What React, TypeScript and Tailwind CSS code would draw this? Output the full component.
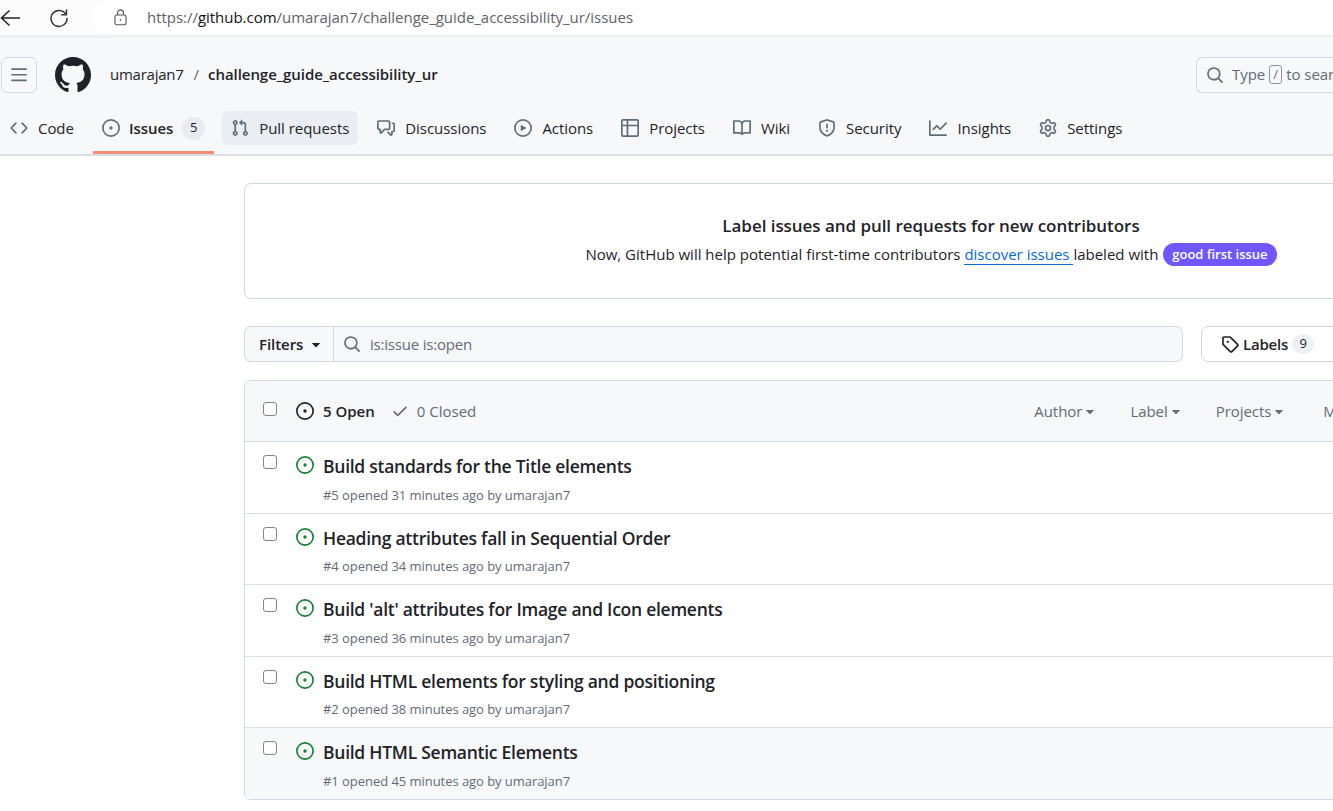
import type { FC } from "react";

// octicons, 16px grid
const icons = {
  code: "m11.28 3.22 4.25 4.25a.75.75 0 0 1 0 1.06l-4.25 4.25a.749.749 0 0 1-1.275-.326.749.749 0 0 1 .215-.734L13.94 8l-3.72-3.72a.749.749 0 0 1 .326-1.275.749.749 0 0 1 .734.215Zm-6.56 0a.751.751 0 0 1 1.042.018.751.751 0 0 1 .018 1.042L2.06 8l3.72 3.72a.749.749 0 0 1-.326 1.275.749.749 0 0 1-.734-.215L.47 8.53a.75.75 0 0 1 0-1.06Z",
  issue: "M8 9.5a1.5 1.5 0 1 0 0-3 1.5 1.5 0 0 0 0 3ZM8 0a8 8 0 1 1 0 16A8 8 0 0 1 8 0ZM1.5 8a6.5 6.5 0 1 0 13 0 6.5 6.5 0 0 0-13 0Z",
  pull: "M1.5 3.25a2.25 2.25 0 1 1 3 2.122v5.256a2.251 2.251 0 1 1-1.5 0V5.372A2.25 2.25 0 0 1 1.5 3.25Zm5.677-.177L9.573.677A.25.25 0 0 1 10 .854V2.5h1A2.5 2.5 0 0 1 13.5 5v5.628a2.251 2.251 0 1 1-1.5 0V5a1 1 0 0 0-1-1h-1v1.646a.25.25 0 0 1-.427.177L7.177 3.427a.25.25 0 0 1 0-.354ZM3.75 2.5a.75.75 0 1 0 0 1.5.75.75 0 0 0 0-1.5Zm0 9.5a.75.75 0 1 0 0 1.5.75.75 0 0 0 0-1.5Zm8.25.75a.75.75 0 1 0 1.5 0 .75.75 0 0 0-1.5 0Z",
  discussion: "M1.75 1h8.5c.966 0 1.75.784 1.75 1.75v5.5A1.75 1.75 0 0 1 10.25 10H7.061l-2.574 2.573A1.458 1.458 0 0 1 2 11.543V10h-.25A1.75 1.75 0 0 1 0 8.25v-5.5C0 1.784.784 1 1.75 1ZM1.5 2.75v5.5c0 .138.112.25.25.25h1a.75.75 0 0 1 .75.75v2.19l2.72-2.72a.749.749 0 0 1 .53-.22h3.5a.25.25 0 0 0 .25-.25v-5.5a.25.25 0 0 0-.25-.25h-8.5a.25.25 0 0 0-.25.25Zm13 2a.25.25 0 0 0-.25-.25h-.5a.75.75 0 0 1 0-1.5h.5c.966 0 1.75.784 1.75 1.75v5.5A1.75 1.75 0 0 1 14.25 12H14v1.543a1.458 1.458 0 0 1-2.487 1.03L9.22 12.28a.749.749 0 0 1 .326-1.275.749.749 0 0 1 .734.215l2.22 2.22v-2.19a.75.75 0 0 1 .75-.75h1a.25.25 0 0 0 .25-.25Z",
  play: "M8 0a8 8 0 1 1 0 16A8 8 0 0 1 8 0ZM1.5 8a6.5 6.5 0 1 0 13 0 6.5 6.5 0 0 0-13 0Zm4.879-2.773 4.264 2.559a.25.25 0 0 1 0 .428l-4.264 2.559A.25.25 0 0 1 6 10.559V5.442a.25.25 0 0 1 .379-.215Z",
  table: "M0 1.75C0 .784.784 0 1.75 0h12.5C15.216 0 16 .784 16 1.75v12.5A1.75 1.75 0 0 1 14.25 16H1.75A1.75 1.75 0 0 1 0 14.25ZM6.5 6.5v8h7.75a.25.25 0 0 0 .25-.25V6.5Zm8-1.5V1.75a.25.25 0 0 0-.25-.25H6.5V5Zm-13 1.5v7.75c0 .138.112.25.25.25H5v-8ZM5 5V1.5H1.75a.25.25 0 0 0-.25.25V5Z",
  book: "M0 1.75A.75.75 0 0 1 .75 1h4.253c1.227 0 2.317.59 3 1.501A3.743 3.743 0 0 1 11.006 1h4.245a.75.75 0 0 1 .75.75v10.5a.75.75 0 0 1-.75.75h-4.507a2.25 2.25 0 0 0-1.591.659l-.622.621a.75.75 0 0 1-1.06 0l-.622-.621A2.25 2.25 0 0 0 5.258 13H.75a.75.75 0 0 1-.75-.75Zm7.251 10.324.004-5.073-.002-2.253A2.25 2.25 0 0 0 5.003 2.5H1.5v9h3.757a3.75 3.75 0 0 1 1.994.574ZM8.755 4.75l-.004 7.322a3.752 3.752 0 0 1 1.992-.572H14.5v-9h-3.495a2.25 2.25 0 0 0-2.25 2.25Z",
  shield: "M7.467.133a1.748 1.748 0 0 1 1.066 0l5.25 1.68A1.75 1.75 0 0 1 15 3.48V7c0 1.566-.32 3.182-1.303 4.682-.983 1.498-2.585 2.813-5.032 3.855a1.697 1.697 0 0 1-1.33 0c-2.447-1.042-4.049-2.357-5.032-3.855C1.32 10.182 1 8.566 1 7V3.48a1.75 1.75 0 0 1 1.217-1.667Zm.61 1.429a.25.25 0 0 0-.153 0l-5.25 1.68a.25.25 0 0 0-.174.238V7c0 1.358.275 2.666 1.057 3.86.784 1.194 2.121 2.34 4.366 3.297a.196.196 0 0 0 .154 0c2.245-.956 3.582-2.104 4.366-3.298C13.225 9.666 13.5 8.36 13.5 7V3.48a.251.251 0 0 0-.174-.237l-5.25-1.68ZM8.75 4.75v3a.75.75 0 0 1-1.5 0v-3a.75.75 0 0 1 1.5 0ZM9 10.5a1 1 0 1 1-2 0 1 1 0 0 1 2 0Z",
  graph: "M1.5 1.75V13.5h13.75a.75.75 0 0 1 0 1.5H.75a.75.75 0 0 1-.75-.75V1.75a.75.75 0 0 1 1.5 0Zm14.28 2.53-5.25 5.25a.75.75 0 0 1-1.06 0L7 7.06 4.28 9.78a.751.751 0 0 1-1.042-.018.751.751 0 0 1-.018-1.042l3.25-3.25a.75.75 0 0 1 1.06 0L10 7.94l4.72-4.72a.751.751 0 0 1 1.042.018.751.751 0 0 1 .018 1.042Z",
  gear: "M8 0a8.2 8.2 0 0 1 .701.031C9.444.095 9.99.645 10.16 1.29l.288 1.107c.018.066.079.158.212.224.231.114.454.243.668.386.123.082.233.09.299.071l1.103-.303c.644-.176 1.392.021 1.82.63.27.385.506.792.704 1.218.315.675.111 1.422-.364 1.891l-.814.806c-.049.048-.098.147-.088.294.016.257.016.515 0 .772-.01.147.038.246.088.294l.814.806c.475.469.679 1.216.364 1.891a7.977 7.977 0 0 1-.704 1.217c-.428.61-1.176.807-1.82.63l-1.102-.302c-.067-.019-.177-.011-.3.071a5.909 5.909 0 0 1-.668.386c-.133.066-.194.158-.211.224l-.29 1.106c-.168.646-.715 1.196-1.458 1.26a8.006 8.006 0 0 1-1.402 0c-.743-.064-1.289-.614-1.458-1.26l-.289-1.106c-.018-.066-.079-.158-.212-.224a5.738 5.738 0 0 1-.668-.386c-.123-.082-.233-.09-.299-.071l-1.103.303c-.644.176-1.392-.021-1.82-.63a8.12 8.12 0 0 1-.704-1.218c-.315-.675-.111-1.422.363-1.891l.815-.806c.05-.048.098-.147.088-.294a6.214 6.214 0 0 1 0-.772c.01-.147-.038-.246-.088-.294l-.815-.806C.635 6.045.431 5.298.746 4.623a7.92 7.92 0 0 1 .704-1.217c.428-.61 1.176-.807 1.82-.63l1.102.302c.067.019.177.011.3-.071.214-.143.437-.272.668-.386.133-.066.194-.158.211-.224l.29-1.106C6.009.645 6.556.095 7.299.03 7.53.01 7.764 0 8 0Zm-.571 1.525c-.036.003-.108.036-.137.146l-.289 1.105c-.147.561-.549.967-.998 1.189-.173.086-.34.183-.5.29-.417.278-.97.423-1.529.27l-1.103-.303c-.109-.03-.175.016-.195.045-.22.312-.412.644-.573.99-.014.031-.021.11.059.19l.815.806c.411.406.562.957.53 1.456a4.709 4.709 0 0 0 0 .582c.032.499-.119 1.05-.53 1.456l-.815.806c-.081.08-.073.159-.059.19.162.346.353.677.573.989.02.03.085.076.195.046l1.102-.303c.56-.153 1.113-.008 1.53.27.161.107.328.204.501.29.447.222.85.629.997 1.189l.289 1.105c.029.109.101.143.137.146a6.6 6.6 0 0 0 1.142 0c.036-.003.108-.036.137-.146l.289-1.105c.147-.561.549-.967.998-1.189.173-.086.34-.183.5-.29.417-.278.97-.423 1.529-.27l1.103.303c.109.029.175-.016.195-.045.22-.313.411-.644.573-.99.014-.031.021-.11-.059-.19l-.815-.806c-.411-.406-.562-.957-.53-1.456a4.709 4.709 0 0 0 0-.582c-.032-.499.119-1.05.53-1.456l.815-.806c.081-.08.073-.159.059-.19a6.464 6.464 0 0 0-.573-.989c-.02-.03-.085-.076-.195-.046l-1.102.303c-.56.153-1.113.008-1.53-.27a4.44 4.44 0 0 0-.501-.29c-.447-.222-.85-.629-.997-1.189l-.289-1.105c-.029-.11-.101-.143-.137-.146a6.6 6.6 0 0 0-1.142 0ZM11 8a3 3 0 1 1-6 0 3 3 0 0 1 6 0ZM9.5 8a1.5 1.5 0 1 0-3.001.001A1.5 1.5 0 0 0 9.5 8Z",
  tag: "M1 7.775V2.75C1 1.784 1.784 1 2.75 1h5.025c.464 0 .91.184 1.238.513l6.25 6.25a1.75 1.75 0 0 1 0 2.474l-5.026 5.026a1.75 1.75 0 0 1-2.474 0l-6.25-6.25A1.752 1.752 0 0 1 1 7.775Zm1.5 0c0 .066.026.13.073.177l6.25 6.25a.25.25 0 0 0 .354 0l5.025-5.025a.25.25 0 0 0 0-.354l-6.25-6.25a.25.25 0 0 0-.177-.073H2.75a.25.25 0 0 0-.25.25ZM6 5a1 1 0 1 1 0 2 1 1 0 0 1 0-2Z",
  check: "M13.78 4.22a.75.75 0 0 1 0 1.06l-7.25 7.25a.75.75 0 0 1-1.06 0L2.22 9.28a.751.751 0 0 1 .018-1.042.751.751 0 0 1 1.042-.018L6 10.94l6.72-6.72a.75.75 0 0 1 1.06 0Z",
  search: "M10.68 11.74a6 6 0 0 1-7.922-8.982 6 6 0 0 1 8.982 7.922l3.04 3.04a.749.749 0 0 1-.326 1.275.749.749 0 0 1-.734-.215ZM11.5 7a4.499 4.499 0 1 0-8.997 0A4.499 4.499 0 0 0 11.5 7Z",
  caret: "m4.427 7.427 3.396 3.396a.25.25 0 0 0 .354 0l3.396-3.396A.25.25 0 0 0 11.396 7H4.604a.25.25 0 0 0-.177.427Z",
  bars: "M1 2.75A.75.75 0 0 1 1.75 2h12.5a.75.75 0 0 1 0 1.5H1.75A.75.75 0 0 1 1 2.75Zm0 5A.75.75 0 0 1 1.75 7h12.5a.75.75 0 0 1 0 1.5H1.75A.75.75 0 0 1 1 7.75ZM1.75 12h12.5a.75.75 0 0 1 0 1.5H1.75a.75.75 0 0 1 0-1.5Z",
  github: "M8 0c4.42 0 8 3.58 8 8a8.013 8.013 0 0 1-5.45 7.59c-.4.08-.55-.17-.55-.38 0-.27.01-1.13.01-2.2 0-.75-.25-1.23-.54-1.48 1.78-.2 3.65-.88 3.65-3.95 0-.88-.31-1.59-.82-2.15.08-.2.36-1.02-.08-2.12 0 0-.67-.22-2.2.82-.64-.18-1.32-.27-2-.27-.68 0-1.36.09-2 .27-1.53-1.03-2.2-.82-2.2-.82-.44 1.1-.16 1.92-.08 2.12-.51.56-.82 1.28-.82 2.15 0 3.06 1.86 3.75 3.64 3.95-.23.2-.44.55-.51 1.07-.46.21-1.61.55-2.33-.66-.15-.24-.6-.83-1.23-.82-.67.01-.27.38.01.53.34.19.73.9.82 1.13.16.45.68 1.31 2.69.94 0 .67.01 1.3.01 1.49 0 .21-.15.45-.55.38A7.995 7.995 0 0 1 0 8c0-4.42 3.58-8 8-8Z",
};

const Octicon: FC<{ name: keyof typeof icons; className: string }> = ({ name, className }) => (
  <svg viewBox="0 0 16 16" fill="currentColor" className={`shrink-0 ${className}`}>
    <path d={icons[name]} />
  </svg>
);

const tabs: { label: string; icon: keyof typeof icons; count?: string }[] = [
  { label: "Code", icon: "code" },
  { label: "Issues", icon: "issue", count: "5" },
  { label: "Pull requests", icon: "pull" },
  { label: "Discussions", icon: "discussion" },
  { label: "Actions", icon: "play" },
  { label: "Projects", icon: "table" },
  { label: "Wiki", icon: "book" },
  { label: "Security", icon: "shield" },
  { label: "Insights", icon: "graph" },
  { label: "Settings", icon: "gear" },
];

const issues = [
  { n: 5, title: "Build standards for the Title elements", ago: "31" },
  { n: 4, title: "Heading attributes fall in Sequential Order", ago: "34" },
  { n: 3, title: "Build 'alt' attributes for Image and Icon elements", ago: "36" },
  { n: 2, title: "Build HTML elements for styling and positioning", ago: "38" },
  { n: 1, title: "Build HTML Semantic Elements", ago: "45" },
];

const Checkbox: FC<{ className?: string }> = ({ className = "" }) => (
  <span className={`block h-[14px] w-[14px] shrink-0 rounded-[3px] border border-[#858585] bg-white ${className}`} />
);

const Menu: FC<{ label: string; className?: string }> = ({ label, className = "" }) => (
  <span className={`flex items-center text-[15px] tracking-[-0.05px] text-[#636c76] ${className}`}>
    {label}
    <Octicon name="caret" className="-ml-[1px] h-[18px] w-[18px]" />
  </span>
);

const BrowserBar: FC = () => (
  <div className="flex h-[35px] items-center bg-[#fbfbfb]">
    <svg viewBox="0 0 20 20" className="h-[20px] w-[20px] text-[#222]" fill="none" stroke="currentColor" strokeWidth="1.5">
      <path d="M20 10H1.5M9.5 2.5 1.5 10l8 7.5" />
    </svg>
    <svg viewBox="0 0 20 20" className="ml-[29px] h-[20px] w-[20px] text-[#333]" fill="none" stroke="currentColor" strokeWidth="1.5">
      <path d="M17 6.5A8 8 0 1 0 18 10M17.5 1.5v5.2h-5.2" />
    </svg>
    <div className="ml-[22px] flex h-[34px] flex-1 items-center self-start rounded-l-[17px] bg-white pl-[22px]">
      <svg viewBox="0 0 16 20" className="h-[17px] w-[15px] text-[#555]" fill="none" stroke="currentColor" strokeWidth="1.3">
        <rect x="1.5" y="7" width="13" height="11.5" rx="2" />
        <path d="M4.5 7V4.5a3.5 3.5 0 0 1 7 0V7" />
        <circle cx="8" cy="12.7" r="1" fill="currentColor" stroke="none" />
      </svg>
      <span className="ml-[19px] text-[15px] tracking-[-0.03px] text-[#5f6368]">
        https://<span className="text-[#111]">github.com</span>/umarajan7/challenge_guide_accessibility_ur/issues
      </span>
    </div>
  </div>
);

const RepoHeader: FC = () => (
  <header className="border-t-[3px] border-b-2 border-t-[#f0f1f2] border-b-[#d9dee3] bg-[#f6f8fa]">
    <div className="flex h-[72px] items-center pt-[1px] text-[15px] tracking-[-0.05px]">
      <button type="button" className="ml-[1px] flex h-[36px] w-[36px] items-center justify-center rounded-[6px] border border-[#d0d7de] text-[#636c76]">
        <Octicon name="bars" className="h-[18px] w-[18px]" />
      </button>
      <Octicon name="github" className="ml-[18px] h-[36px] w-[36px] text-[#1f2328]" />
      <span className="ml-[19px] tracking-[-0.25px] text-[#1f2328]">umarajan7</span>
      <span className="ml-[10px] text-[#636c76]">/</span>
      <span className="ml-[9px] font-semibold text-[#1f2328]">challenge_guide_accessibility_ur</span>
      <div className="ml-auto flex h-[36px] w-[137px] shrink-0 items-center overflow-hidden whitespace-nowrap rounded-l-[6px] border border-r-0 border-[#d0d7de] pl-[9px] text-[#636c76]">
        <Octicon name="search" className="h-[18px] w-[18px]" />
        <span className="ml-[8px]">Type</span>
        <span className="mx-[4px] flex h-[19px] w-[13px] shrink-0 items-center justify-center rounded-[3px] border border-[#8c959f] text-[13px]">/</span>
        <span>to search</span>
      </div>
    </div>
    <nav className="flex h-[44px] items-start gap-[10px] pl-[1px] pt-[1px]">
      {tabs.map(({ label, icon, count }) => (
        <div
          key={label}
          className={`flex h-[43px] items-start ${label === "Issues" ? "-mr-[2px] border-b-[3px] border-b-[#fd8c73]" : ""}`}
        >
          <div className={`flex h-[34px] items-center gap-[10px] rounded-[6px] px-[9px] text-[#1f2328] ${label === "Pull requests" ? "bg-[#eaeef2]" : ""}`}>
            <Octicon name={icon} className="h-[18px] w-[18px] text-[#636c76]" />
            <span className={`pt-[1px] text-[15px] tracking-[-0.05px] ${label === "Issues" ? "-ml-[1px] -mr-[1px] font-semibold tracking-[-0.3px]" : ""}`}>{label}</span>
            {count && (
              <span className="flex h-[23px] w-[23px] items-center justify-center rounded-full bg-[#e8ebef] text-[13px] font-medium">
                {count}
              </span>
            )}
          </div>
        </div>
      ))}
    </nav>
  </header>
);

const Banner: FC = () => (
  <section className="flex h-[116px] w-[1374px] flex-col items-center rounded-l-[7px] border border-[#d0d7de] pt-[28px]">
    <h2 className="text-[17px] leading-[28px] font-semibold tracking-[-0.05px] text-[#1f2328]">Label issues and pull requests for new contributors</h2>
    <p className="flex items-center text-[15px] leading-[28px] text-[#1f2328]">
      Now, GitHub will help potential first-time contributors&nbsp;
      <span className="border-b border-[#0969da] leading-[20px] text-[#0969da]">discover issues&nbsp;</span>
      labeled with&nbsp;
      <span className="ml-[1px] rounded-full bg-[#7057ff] px-[9px] text-[13px] leading-[23px] font-semibold text-white">good first issue</span>
    </p>
  </section>
);

const FilterRow: FC = () => (
  <div className="mt-[27px] flex h-[36px] text-[15px]">
    <button type="button" className="flex w-[90px] items-center rounded-l-[7px] border border-[#d0d7de] bg-[#f6f8fa] pl-[14px] font-semibold tracking-[-0.05px] text-[#1f2328]">
      <span className="pt-[1px]">Filters</span>
      <Octicon name="caret" className="ml-[4px] h-[18px] w-[18px]" />
    </button>
    <div className="flex w-[849px] items-center rounded-r-[7px] border border-l-0 border-[#d0d7de] bg-[#f6f8fa] pl-[9px] text-[#636c76]">
      <Octicon name="search" className="h-[18px] w-[18px]" />
      <span className="ml-[9px] pt-[1px] tracking-[-0.2px]">is:issue is:open</span>
    </div>
    <div className="ml-[18px] flex w-[200px] items-center rounded-l-[7px] border border-[#d0d7de] pl-[19px] text-[#1f2328]">
      <Octicon name="tag" className="h-[18px] w-[18px]" />
      <span className="ml-[4px] font-semibold tracking-[-0.2px]">Labels</span>
      <span className="ml-[4px] flex h-[20px] w-[22px] items-center justify-center rounded-full bg-[#eff2f5] text-[13px] font-medium">9</span>
    </div>
  </div>
);

const IssueList: FC = () => (
  <section className="mt-[18px] w-[1374px] overflow-hidden rounded-l-[7px] border border-[#d0d7de]">
    <div className="flex h-[60px] items-center bg-[#f6f8fa] pl-[18px]">
      <Checkbox className="mb-[5px]" />
      <Octicon name="issue" className="ml-[19px] h-[18px] w-[18px] text-[#1f2328]" />
      <span className="ml-[9px] pt-[1px] text-[15px] font-semibold text-[#1f2328]">5 Open</span>
      <Octicon name="check" className="ml-[16px] h-[18px] w-[18px] text-[#636c76]" />
      <span className="ml-[8px] pt-[1px] text-[15px] text-[#636c76]">0 Closed</span>
      <div className="ml-[558px] flex gap-[32px] whitespace-nowrap">
        <Menu label="Author" className="-mr-[1px]" />
        <Menu label="Label" className="-mr-[1px]" />
        <Menu label="Projects" />
        <Menu label="Milestones" className="ml-[3px]" />
      </div>
    </div>
    {issues.map((issue) => (
      <div
        key={issue.n}
        className={`flex h-[71.6px] border-t border-[#d8dee4] pl-[18px] ${issue.n === 1 ? "bg-[#f6f8fa]" : ""}`}
      >
        <div className="pt-[13px]">
          <Checkbox />
        </div>
        <Octicon name="issue" className="ml-[19px] mt-[14px] h-[18px] w-[18px] text-[#1a7f37]" />
        <div className="ml-[9px] pt-[9px]">
          <div className="text-[17.5px] leading-[30px] font-semibold tracking-[-0.26px] text-[#1f2328]">{issue.title}</div>
          <div className="mt-[3.6px] text-[13px] leading-[20px] tracking-[-0.05px] text-[#636c76]">
            #{issue.n} opened {issue.ago} minutes ago by umarajan7
          </div>
        </div>
      </div>
    ))}
  </section>
);

export default function App() {
  return (
    <div className="h-[811px] w-[1333px] overflow-hidden bg-white font-['Open_Sans','Noto_Sans',sans-serif]">
      <BrowserBar />
      <RepoHeader />
      <main className="pt-[27px] pl-[244px]">
        <div className="w-[1400px]">
          <Banner />
          <FilterRow />
          <IssueList />
        </div>
      </main>
    </div>
  );
}
